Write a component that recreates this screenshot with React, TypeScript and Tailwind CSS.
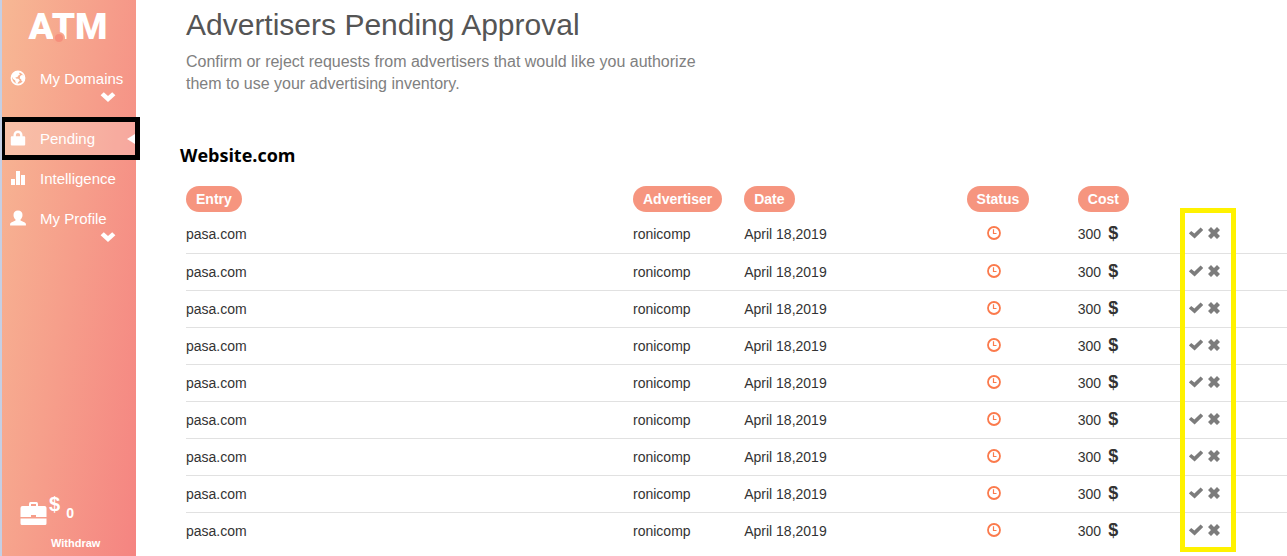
import type { ReactNode } from "react";

const rows = Array.from({ length: 9 }, (_, id) => ({
  id,
  entry: "pasa.com",
  advertiser: "ronicomp",
  date: "April 18,2019",
  cost: 300,
}));

function Logo() {
  return (
    <svg
      viewBox="0 0 90 50"
      className="h-[50px] w-[90px]"
      role="img"
      aria-label="ATM"
    >
      <text
        x="44"
        y="37"
        textAnchor="middle"
        fill="#fff"
        fontSize="37"
        fontWeight="900"
        fontFamily="Roboto, 'Liberation Sans', sans-serif"
      >
        ATM
      </text>
      <circle cx="35" cy="36" r="6" fill="#f7a78d" />
      <circle cx="35" cy="36" r="4" fill="#f58f7c" />
    </svg>
  );
}

function GlobeIcon() {
  return (
    <svg viewBox="0 0 16 16" className="size-4" aria-hidden="true">
      <circle cx="8" cy="8" r="6.6" fill="none" stroke="#fff" strokeWidth="1.6" />
      <path
        fill="#fff"
        d="M1.6 6 3 3 7 1.2l3 .6-1 1.600 1.200.8-1.800 1.200-1 1.600-2 .4L6 8.400l2.400.4 1.400 1.800-1.800 2-.8 1.800-1.600-1.800-.4-2.200L3.200 9zM10.200 6l2-1.200 2.200 1.600v3.200l-1.600 2-1.400-.8-.2-1.600-1.400-.8z"
      />
    </svg>
  );
}

function LockIcon() {
  return (
    <svg viewBox="0 0 16 16" className="size-4" aria-hidden="true">
      <path
        fill="#fff"
        d="M3.500 6.200V5a4.500 4.500 0 0 1 9 0v1.200h1.700q1 0 1 1V14.500q0 1-1 1H1.800q-1 0-1-1V7.200q0-1 1-1zm2.400 0h4.200V5a2.100 2.100 0 0 0-4.200 0z"
      />
    </svg>
  );
}

function StatsIcon() {
  return (
    <svg viewBox="0 0 16 16" className="size-4" aria-hidden="true">
      <path fill="#fff" d="M1 9h4v6H1zM6 1h4v14H6zM11 5h4v10h-4z" />
    </svg>
  );
}

function UserIcon() {
  return (
    <svg viewBox="0 0 16 16" className="size-4" aria-hidden="true">
      <path
        fill="#fff"
        d="M8 .6c2.800 0 4.500 1.700 4.500 4.400 0 1.900-.8 3.600-2 4.500v1.100l4.300 2q1.100.5 1.100 1.500V15.400H.1v-1.300q0-1 1.100-1.500l4.300-2V9.500c-1.200-.9-2-2.600-2-4.500C3.500 2.300 5.200.6 8 .6z"
      />
    </svg>
  );
}

function Chevron() {
  return (
    <svg viewBox="0 0 16 10" className="h-[10px] w-4" aria-hidden="true">
      <path fill="#fff" d="M3.800.2 8 4l4.200-3.800L15.400 3.200 8 10 .6 3.200z" />
    </svg>
  );
}

function Briefcase() {
  return (
    <svg viewBox="0 0 27 25" className="h-[25px] w-[27px]" aria-hidden="true">
      <path
        fill="#fff"
        d="M9 5V3q0-2 1.500-2h6Q18 1 18 3v2h6.500Q26.500 5 26.500 7v9H16v-2h-5v2H.5V7q0-2 2-2zm2 0h5V3h-5zM.5 17.500h26v5q0 1.500-1.500 1.500H2Q.5 24 .5 22.500z"
      />
    </svg>
  );
}

function Clock() {
  return (
    <svg
      viewBox="0 0 14 14"
      className="size-[14px]"
      role="img"
      aria-label="Waiting"
    >
      <circle cx="7" cy="7" r="6" fill="none" stroke="#fb7a4c" strokeWidth="1.800" />
      <path d="M6.500 3.200v4.300H9.500" fill="none" stroke="#fb7a4c" strokeWidth="1.200" />
    </svg>
  );
}

function Check() {
  return (
    <svg viewBox="0 0 14 12" className="h-3 w-[14px]" aria-hidden="true">
      <path fill="#7c7c7c" d="M11.600.4 14.200 3 5.600 11.600-.2 6.400 2.200 4l3.200 2.600z" />
    </svg>
  );
}

function Cross() {
  return (
    <svg viewBox="0 0 12 12" className="size-3" aria-hidden="true">
      <path
        fill="#7c7c7c"
        d="M3 0 6 3 9 0l3 3-3 3 3 3-3 3-3-3-3 3-3-3 3-3-3-3z"
      />
    </svg>
  );
}

function NavItem({
  icon,
  label,
  expandable,
  active,
}: {
  icon: ReactNode;
  label: string;
  expandable?: boolean;
  active?: boolean;
}) {
  return (
    <li className={active ? "relative bg-white/20" : ""}>
      <a href="#" className="block">
        <span className="flex h-10 items-center gap-3.5 pl-2">
          <span className="pb-0.5">{icon}</span>
          {label}
        </span>
        {expandable && (
          <span className="-mt-2 flex h-7 justify-end pt-px pr-5">
            <Chevron />
          </span>
        )}
      </a>
      {active && (
        <>
          <svg
            viewBox="0 0 8 10"
            className="absolute top-[15px] right-px h-[10px] w-2"
            aria-hidden="true"
          >
            <path fill="#fff" d="M8 0v10L0 5z" />
          </svg>
          <div className="pointer-events-none absolute -top-0.5 -right-1 -bottom-px left-0 border-y-5 border-r-5 border-l-3 border-black" />
        </>
      )}
    </li>
  );
}

function Pill({ children }: { children: ReactNode }) {
  return (
    <span className="inline-block rounded-full bg-[#f6957f] px-2.5 text-sm leading-[26px] font-bold text-white">
      {children}
    </span>
  );
}

export default function App() {
  return (
    <div className="flex min-h-screen bg-white font-['Liberation_Sans',Arial,sans-serif]">
      <aside className="flex w-[136px] shrink-0 flex-col border-l-2 border-[#c5cfe4] bg-[linear-gradient(98deg,#f7b894,#f58481)] bg-origin-border text-[15px] text-white">
        <div className="flex h-[59px] justify-center pt-0.5">
          <Logo />
        </div>
        <nav>
          <ul>
            <NavItem icon={<GlobeIcon />} label="My Domains" expandable />
            <NavItem icon={<LockIcon />} label="Pending" active />
            <NavItem icon={<StatsIcon />} label="Intelligence" />
            <NavItem icon={<UserIcon />} label="My Profile" expandable />
          </ul>
        </nav>
        <div className="mt-auto pb-1 font-bold">
          <div className="flex items-end pl-[18px]">
            <Briefcase />
            <span className="mb-3 ml-0.5 text-xl leading-5">$</span>
            <span className="ml-1.5 text-sm leading-[26px]">0</span>
          </div>
          <a href="#" className="mt-2 block pl-[49px] text-[11px] leading-[18px]">
            Withdraw
          </a>
        </div>
      </aside>

      <main className="min-w-0 flex-1 pl-[50px]">
        <h1 className="pt-[5px] text-[30px] leading-10 text-[#555]">
          Advertisers Pending Approval
        </h1>
        <p className="mt-1.5 max-w-[530px] text-base leading-[22px] text-[#808080]">
          Confirm or reject requests from advertisers that would like you
          authorize them to use your advertising inventory.
        </p>
        <h2 className="mt-12 -ml-1.5 font-['Open_Sans',sans-serif] text-lg leading-6 font-bold text-black">
          Website.com
        </h2>

        <div className="relative mt-[19px]">
          <table className="w-full table-fixed text-left text-sm text-[#333]">
            <colgroup>
              <col className="w-[40.6%]" />
              <col className="w-[10.1%]" />
              <col className="w-[20.2%]" />
              <col className="w-[10.1%]" />
              <col className="w-[10.1%]" />
              <col />
            </colgroup>
            <thead>
              <tr className="h-[30px] align-top">
                <th>
                  <Pill>Entry</Pill>
                </th>
                <th>
                  <Pill>Advertiser</Pill>
                </th>
                <th>
                  <Pill>Date</Pill>
                </th>
                <th>
                  <Pill>Status</Pill>
                </th>
                <th>
                  <Pill>Cost</Pill>
                </th>
                <th aria-label="Actions" />
              </tr>
            </thead>
            <tbody>
              {rows.map((row) => (
                <tr
                  key={row.id}
                  className="h-[37px] border-b border-[#e1e1e1] last:border-0"
                >
                  <td>{row.entry}</td>
                  <td>{row.advertiser}</td>
                  <td>{row.date}</td>
                  <td className="pb-0.5 pl-5">
                    <Clock />
                  </td>
                  <td>
                    <span className="flex items-center gap-[7px]">
                      {row.cost}
                      <b className="pb-0.5 text-lg leading-5 font-bold">$</b>
                    </span>
                  </td>
                  <td className="pb-0.5">
                    <span className="flex items-center gap-[5px]">
                      <button aria-label="Approve">
                        <Check />
                      </button>
                      <button aria-label="Reject">
                        <Cross />
                      </button>
                    </span>
                  </td>
                </tr>
              ))}
            </tbody>
          </table>
          <div className="pointer-events-none absolute top-[22px] -bottom-[3px] left-[90.3%] w-14 border-5 border-[#fff200]" />
        </div>
      </main>
    </div>
  );
}
